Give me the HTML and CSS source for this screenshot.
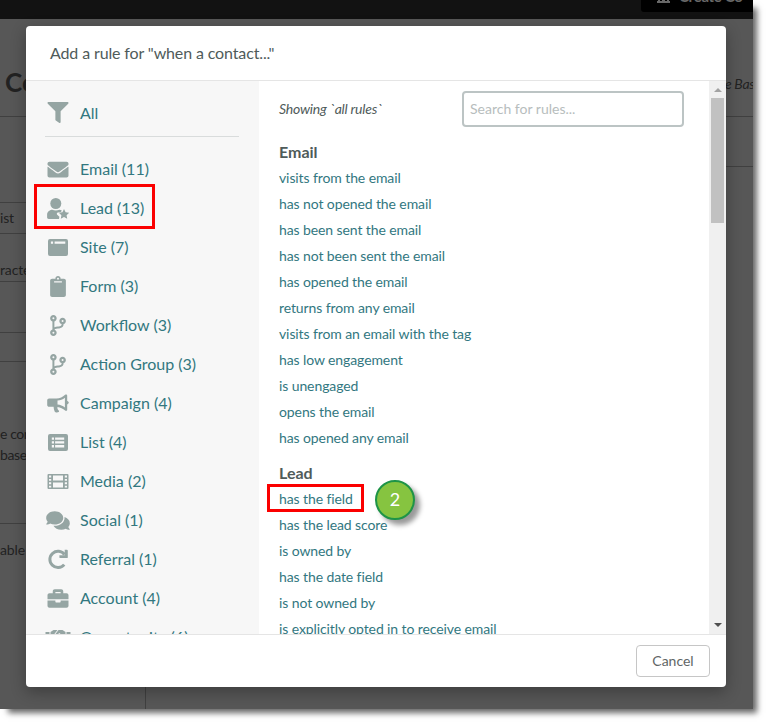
FILE: index.html
```html
<!DOCTYPE html>
<html lang="en">
<head>
<meta charset="utf-8">
<title>Add a rule</title>
<link rel="stylesheet" href="styles.css">
</head>
<body>
<div class="screen">
  <div class="page">
    <div class="topbar"><div class="create"><svg width="13" height="12" viewBox="0 0 13 12"><path d="M1 0h11v10h1v2H0v-2h1zM3 2v3h2V2zm5 0v3h2V2zM3 7v3h2V7zm5 0v3h2V7z" fill-rule="evenodd"/></svg><span>Create Co</span></div></div>
    <div class="titlebar"><h1>Co</h1><em>e Bas</em></div>
    <div class="columns">
      <div class="left">
        <div class="cell c1"></div>
        <div class="cell c2">ist</div>
        <div class="cell c3">racte</div>
        <div class="cell c4"></div>
        <div class="cell c5"></div>
        <div class="cell c6">e con<br>base</div>
        <div class="cell c7">able</div>
      </div>
      <div class="right"><div class="strip"></div></div>
    </div>
  </div>

  <div class="modal">
    <header>Add a rule for "when a contact..."</header>
    <div class="body">
      <nav>
        <a class="all"><svg class="icon" viewBox="0 0 512 512"><path d="M487.976 0H24.028C2.71 0-8.047 25.866 7.058 40.971L192 225.941V432c0 7.831 3.821 15.17 10.237 19.662l80 55.98C298.02 518.69 320 507.493 320 487.98V225.941l184.947-184.97C520.021 25.896 509.338 0 487.976 0z"/></svg><span>All</span></a>
        <a><svg class="icon" viewBox="0 0 512 512"><path d="M502.3 190.8c3.9-3.1 9.7-.2 9.7 4.7V400c0 26.5-21.5 48-48 48H48c-26.5 0-48-21.5-48-48V195.6c0-5 5.7-7.8 9.7-4.7 22.4 17.4 52.1 39.5 154.1 113.6 21.1 15.4 56.7 47.8 92.2 47.6 35.7.3 72-32.8 92.3-47.6 102-74.1 131.6-96.3 154-113.7zM256 320c23.2.4 56.6-29.2 73.4-41.4 132.7-96.3 142.8-104.7 173.4-128.7 5.8-4.5 9.2-11.5 9.2-18.9v-19c0-26.5-21.5-48-48-48H48c-26.5 0-48 21.5-48 48v19c0 7.4 3.4 14.3 9.2 18.9 30.6 23.9 40.7 32.4 173.4 128.7 16.8 12.2 50.2 41.8 73.4 41.4z"/></svg><span>Email (11)</span></a>
        <a class="marked"><svg class="icon wide" viewBox="0 0 23 21"><circle cx="9.3" cy="5.5" r="5.5"/><path d="M5.7 11.700c2.200 1 5 1 7.200 0 1 .1 1.800.4 2.400.9l-.8 1.400-3 .4c-1.200.2-1.600 1.400-.8 2.300l2.200 2-.4 2.200H2.200c-1 0-1.600-.6-1.600-1.600v-2.500c0-2.800 2.300-5.100 5.100-5.100z"/><path d="M17.500 11l1.600 3.200 3.600.5-2.600 2.500.6 3.600-3.200-1.700-3.200 1.700.6-3.600-2.600-2.500 3.600-.5z"/></svg><span>Lead (13)</span></a>
        <a><svg class="icon" viewBox="0 0 21 21"><path fill-rule="evenodd" d="M2.500 2h16a2 2 0 0 1 2 2v13a2 2 0 0 1-2 2h-16a2 2 0 0 1-2-2V4a2 2 0 0 1 2-2zm.9 2.600v2.200h2.200V4.600zm3.700 0v2.200h10.700V4.600z"/></svg><span>Site (7)</span></a>
        <a><svg class="icon" viewBox="0 0 384 512"><path d="M384 112v352c0 26.500-21.500 48-48 48H48c-26.500 0-48-21.500-48-48V112c0-26.500 21.500-48 48-48h80c0-35.300 28.700-64 64-64s64 28.700 64 64h80c26.500 0 48 21.500 48 48zM192 40c-13.300 0-24 10.700-24 24s10.700 24 24 24 24-10.700 24-24-10.700-24-24-24m96 114v-20a6 6 0 0 0-6-6H102a6 6 0 0 0-6 6v20a6 6 0 0 0 6 6h180a6 6 0 0 0 6-6z"/></svg><span>Form (3)</span></a>
        <a><svg class="icon branch" viewBox="0 0 384 512"><path d="M384 144c0-44.200-35.800-80-80-80s-80 35.800-80 80c0 36.400 24.300 67.100 57.500 76.800-.6 16.100-4.200 28.500-11 36.900-15.400 19.200-49.300 22.400-85.200 25.700-28.200 2.600-57.400 5.400-81.300 16.900v-144c32.500-10.200 56-40.500 56-76.300 0-44.200-35.800-80-80-80S0 35.800 0 80c0 35.800 23.500 66.100 56 76.300v199.300C23.500 365.900 0 396.200 0 432c0 44.200 35.800 80 80 80s80-35.800 80-80c0-34-21.200-63.100-51.200-74.600 3.100-5.200 7.800-9.800 14.900-13.400 16.200-8.200 40.400-10.400 66.100-12.800 42.200-3.900 90-8.400 118.200-43.400 14-17.400 21.100-39.800 21.600-67.900 31.600-10.800 54.400-40.700 54.400-75.900zM80 56a24 24 0 1 1 0 48 24 24 0 0 1 0-48zm0 352a24 24 0 1 1 0 48 24 24 0 0 1 0-48zm224-288a24 24 0 1 1 0 48 24 24 0 0 1 0-48z" fill-rule="evenodd"/></svg><span>Workflow (3)</span></a>
        <a><svg class="icon branch" viewBox="0 0 384 512"><path d="M384 144c0-44.200-35.800-80-80-80s-80 35.800-80 80c0 36.400 24.300 67.100 57.500 76.800-.6 16.100-4.200 28.500-11 36.900-15.400 19.200-49.300 22.400-85.200 25.700-28.200 2.600-57.400 5.400-81.300 16.900v-144c32.500-10.200 56-40.500 56-76.300 0-44.200-35.800-80-80-80S0 35.800 0 80c0 35.800 23.500 66.100 56 76.300v199.300C23.500 365.900 0 396.200 0 432c0 44.200 35.800 80 80 80s80-35.800 80-80c0-34-21.200-63.100-51.200-74.600 3.100-5.200 7.800-9.800 14.900-13.400 16.200-8.200 40.400-10.400 66.100-12.800 42.200-3.900 90-8.400 118.200-43.400 14-17.400 21.100-39.800 21.600-67.900 31.600-10.800 54.400-40.700 54.400-75.900zM80 56a24 24 0 1 1 0 48 24 24 0 0 1 0-48zm0 352a24 24 0 1 1 0 48 24 24 0 0 1 0-48zm224-288a24 24 0 1 1 0 48 24 24 0 0 1 0-48z" fill-rule="evenodd"/></svg><span>Action Group (3)</span></a>
        <a><svg class="icon wide" viewBox="0 0 23 21"><path fill-rule="evenodd" d="M2.600 5.500H10c3.300 0 6.300-1.500 8.600-3.700.9-.8 2.100-.3 2.100.8v5.300c1 .3 1.600.9 1.600 1.700s-.6 1.500-1.600 1.800v5.300c0 1.100-1.200 1.600-2.100.8-2.100-2-4.800-3.300-7.600-3.600-.3 1.500.2 2.700 1.200 3.500.6.500.5 1-.1 1.600-.6.700-3.300.7-3.800-.2-.8-1.600-1.200-3.200-1.200-5H2.600c-1.100 0-1.900-.8-1.900-1.900V7.400c0-1.100.8-1.900 1.900-1.900zM11 7.600v4c2.800.3 5.200 1.300 7.400 2.900V4.700C16.200 6.400 13.800 7.300 11 7.600z"/></svg><span>Campaign (4)</span></a>
        <a><svg class="icon" viewBox="0 0 21 21"><path fill-rule="evenodd" d="M2.500 2h16a2 2 0 0 1 2 2v13a2 2 0 0 1-2 2h-16a2 2 0 0 1-2-2V4a2 2 0 0 1 2-2zM4.300 5.500v2.300h2.200V5.500zm3.300 0v2.300h9.100V5.500zM4.300 9.300v2.300h2.200V9.300zm3.300 0v2.300h9.100V9.300zM4.300 13.100v2.300h2.200v-2.300zm3.300 0v2.300h9.100v-2.300z"/></svg><span>List (4)</span></a>
        <a><svg class="icon" viewBox="0 0 21 21"><path fill-rule="evenodd" d="M0 4q0-1 1-1h19q1 0 1 1v13q0 1-1 1H1q-1 0-1-1zM1.500 4.500v1.900h2.200V4.500zm0 3.400v1.900h2.200V7.900zm0 3.400v1.900h2.200v-1.900zm0 3.400v1.900h2.200v-1.900zM5.500 4.500v5h10v-5zm0 7v5h10v-5zM17.300 4.500v1.900h2.200V4.500zm0 3.400v1.900h2.200V7.900zm0 3.400v1.900h2.200v-1.900zm0 3.400v1.900h2.200v-1.900z"/></svg><span>Media (2)</span></a>
        <a><svg class="icon wide" viewBox="0 0 576 512"><path d="M416 192c0-88.400-93.100-160-208-160S0 103.600 0 192c0 34.300 14.100 65.900 38 92-13.400 30.200-35.500 54.200-35.800 54.500-2.200 2.300-2.800 5.700-1.500 8.700S4.800 352 8 352c36.600 0 66.900-12.300 88.700-25 32.200 15.700 70.300 25 111.300 25 114.900 0 208-71.600 208-160zm122 220c23.900-26 38-57.700 38-92 0-66.900-53.500-124.200-129.300-148.100.9 6.600 1.300 13.300 1.300 20.100 0 105.900-107.700 192-240 192-10.800 0-21.300-.8-31.700-1.900C207.800 439.600 281.800 480 368 480c41 0 79.100-9.200 111.300-25 21.800 12.700 52.100 25 88.700 25 3.200 0 6.100-1.900 7.300-4.800 1.300-2.900.7-6.300-1.500-8.700-.3-.3-22.400-24.200-35.800-54.500z"/></svg><span>Social (1)</span></a>
        <a><svg class="icon" viewBox="0 0 21 21"><path d="M16.700 15.600A8.100 8.100 0 1 1 17 5.600" fill="none" stroke="#95a5a3" stroke-width="3"/><path d="M17.200.8h2.200q.9 0 .9.900v6.500q0 .9-.9.900h-6.600q-.9 0-.9-.9V6.200h5.300z"/></svg><span>Referral (1)</span></a>
        <a><svg class="icon" viewBox="0 0 512 512"><path d="M320 336c0 8.840-7.160 16-16 16h-96c-8.840 0-16-7.160-16-16v-32H0v128c0 25.600 22.400 48 48 48h416c25.600 0 48-22.400 48-48V304H320v32zm144-208h-80V80c0-25.600-22.400-48-48-48H176c-25.600 0-48 22.400-48 48v48H48c-25.600 0-48 22.400-48 48v96h512v-96c0-25.600-22.400-48-48-48zm-144 0H192V96h128v32z"/></svg><span>Account (4)</span></a>
        <a><svg class="icon hands" viewBox="0 0 25 21"><path d="M0 5h4v10H0zM5 5l3-2h4L8.500 7.500c0 2 2 2.500 3.500 1L14 7l6 6v4H5zM13 3h4l3 2v7l-6-6-3 2-1-1zM21 5h4v10h-4z"/></svg><span>Opportunity (6)</span></a>
      </nav>
      <main>
        <div class="rules">
          <div class="search"><em>Showing `all rules`</em><input type="text" placeholder="Search for rules..."></div>
          <h2>Email</h2>
          <ul>
            <li>visits from the email</li><li>has not opened the email</li><li>has been sent the email</li><li>has not been sent the email</li><li>has opened the email</li><li>returns from any email</li><li>visits from an email with the tag</li><li>has low engagement</li><li>is unengaged</li><li>opens the email</li><li>has opened any email</li>
          </ul>
          <h2>Lead</h2>
          <ul>
            <li class="target">has the field<b class="step">2</b></li><li>has the lead score</li><li>is owned by</li><li>has the date field</li><li>is not owned by</li><li>is explicitly opted in to receive email</li>
          </ul>
        </div>
        <div class="scrollbar"><i class="up"></i><div class="thumb"></div><i class="down"></i></div>
      </main>
    </div>
    <footer><button>Cancel</button></footer>
  </div>
</div>
</body>
</html>
```

FILE: styles.css
```css
*, *::before, *::after { box-sizing: border-box; }
body { margin: 0; min-height: 724px; background: #fff; font-family: Lato, "Liberation Sans", sans-serif; }
h1, h2, ul { margin: 0; padding: 0; }

.screen { position: relative; width: 753px; height: 709px; background: #575757; box-shadow: 6px 6px 6px -2px rgba(0, 0, 0, .6); }

/* dimmed page behind the dialog */
.page { height: 709px; overflow: hidden; color: #222; font-size: 14px; }
.topbar { display: flex; justify-content: flex-end; height: 19px; background: #121212; }
.create { display: flex; gap: 9px; width: 112px; height: 12px; padding-left: 16px; background: #000; border-radius: 0 0 0 3px; overflow: hidden; color: #686868; font-size: 15px; font-weight: 700; line-height: 18px; letter-spacing: -.3px; white-space: nowrap; }
.create svg { margin-top: -9px; fill: #686868; flex: none; }
.create span { margin-top: -13px; }
.titlebar { display: flex; justify-content: space-between; height: 98px; border-bottom: 1px solid #404040; padding-left: 5px; }
.titlebar h1 { font-size: 26px; line-height: 32px; margin-top: 47px; }
.titlebar em { margin-top: 55px; line-height: 20px; width: 28px; letter-spacing: -.3px; white-space: nowrap; }
.columns { display: flex; height: 592px; }
.left { width: 146px; border-right: 1px solid #404040; }
.right { flex: 1; }
.strip { height: 50px; border-bottom: 1px solid #404040; }
.cell { border-bottom: 1px solid #404040; line-height: 21px; letter-spacing: -.15px; }
.c1 { height: 86px; }
.c2 { height: 31px; padding-top: 4px; }
.c3 { height: 48px; padding-top: 25px; }
.c4 { height: 51px; }
.c5 { height: 29px; }
.c6 { height: 162px; padding-top: 61px; letter-spacing: -.4px; }
.c7 { border: 0; padding-top: 15px; }

/* dialog */
.modal { position: absolute; left: 26px; top: 26px; width: 700px; height: 661px; display: flex; flex-direction: column; background: #fff; border-radius: 4px; overflow: hidden; box-shadow: 0 5px 15px rgba(0, 0, 0, .3); }
.modal header { height: 55px; border-bottom: 1px solid #e5e5e5; padding-left: 24px; font-size: 16px; line-height: 54px; letter-spacing: -.13px; color: #4f5b5a; }
.body { display: flex; height: 553px; overflow: hidden; }
nav { width: 233px; flex: none; background: #f7f7f7; }
nav a { position: relative; display: flex; align-items: center; height: 39px; padding-left: 19px; font-size: 16px; color: #32777f; }
nav a span { margin: -2px 0 0 9px; }
nav .all { height: 56px; margin: 0 20px 13px 19px; padding: 9px 0 0; border-bottom: 1px solid #d9dcdc; }
.icon { width: 26px; height: 21px; flex: none; fill: #95a5a3; margin-top: -1px; }
.all .icon { margin-top: -2px; }
.marked::after { content: ""; position: absolute; left: 8px; top: -5px; width: 121px; height: 45px; border: 3px solid #fb0000; }

main { display: flex; flex: 1; }
.rules { flex: 1; padding: 10px 25px 0 20px; color: #4f5b5a; }
.search { display: flex; justify-content: space-between; height: 36px; margin-bottom: 15px; }
.search em { font-size: 14px; line-height: 36px; letter-spacing: -.21px; }
.search input { width: 222px; height: 36px; border: 2px solid #bcc4c4; border-radius: 4px; padding: 0 6px 2px; font: 14px Lato, sans-serif; background: #fff; }
.search input::placeholder { color: #b7bdbd; opacity: 1; }
.rules h2 { font-size: 16px; line-height: 20px; height: 23px; }
.rules ul { list-style: none; margin-bottom: 12px; }
.rules li { position: relative; height: 26px; line-height: 26px; font-size: 14px; letter-spacing: -.1px; font-variant-ligatures: common-ligatures; color: #32777f; white-space: nowrap; }
.target::before { content: ""; position: absolute; left: -12px; top: -2px; width: 97px; height: 28px; border: 3px solid #fb0000; }
.step { position: absolute; z-index: 1; left: 96px; top: -6px; width: 40px; height: 40px; border: 2px solid #1e9447; border-radius: 50%; background: #86c440; color: #fff; text-align: center; font-size: 18px; font-weight: 400; line-height: 35px; box-shadow: 5px 5px 5px rgba(0, 0, 0, .4); }

.scrollbar { width: 17px; display: flex; flex-direction: column; align-items: center; background: #f0f0f0; }
.thumb { width: 13px; height: 125px; background: #c1c1c1; margin: 6px 0 auto 0; }
.up { margin-top: 7px; border: 4px solid transparent; border-top: 0; border-bottom-color: #a3a3a3; }
.down { margin-bottom: 7px; border: 4px solid transparent; border-bottom: 0; border-top-color: #505050; }

.modal footer { height: 53px; display: flex; justify-content: flex-end; padding: 10px 16px; border-top: 1px solid #e5e5e5; }
.modal button { width: 74px; height: 32px; padding: 0 0 2px; border: 1px solid #c6c6c6; border-radius: 4px; background: #fff; color: #616666; font: 14px Lato, sans-serif; }
```
